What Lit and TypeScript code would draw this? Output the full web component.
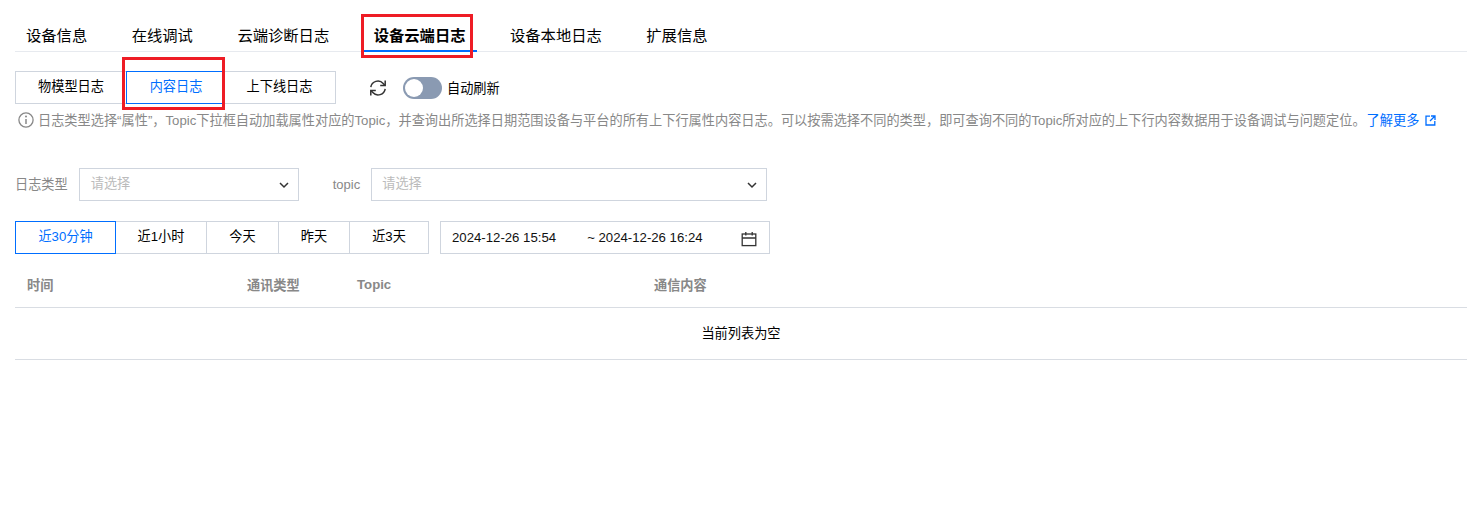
import { LitElement, html, css } from "lit";
import { customElement } from "lit/decorators.js";

const chevron = html`<svg class="chev" width="12" height="12" viewBox="0 0 12 12"><path d="M2 4l4 4 4-4" fill="none" stroke="#333" stroke-width="1.5"/></svg>`;

@customElement("app-root")
export class AppRoot extends LitElement {
  static styles = css`
    :host { display: block; position: relative; height: 508px; background: #fff; overflow: hidden;
      font-family: "Liberation Sans", "Noto Sans CJK SC", sans-serif; font-size: 13.2px; color: #000; }
    .page { padding: 16px 12px 0 15px; display: flex; flex-direction: column; }
    .tabs { display: flex; height: 35px; border-bottom: 1px solid #e7eaef; box-sizing: content-box; }
    .tab { font-size: 15.3px; line-height: 39px; padding: 0 11px; margin-right: 22.5px; height: 36px; box-sizing: border-box; color: #000; white-space: nowrap; }
    .tab.on { font-weight: 700; border-bottom: 2px solid #006eff; }
    .row1 { display: flex; align-items: center; margin-top: 19px; }
    .seg { display: flex; height: 33px; }
    .seg > div { border: 1px solid #cfd5de; margin-left: -1px; padding-bottom: 5px; display: flex; align-items: center; justify-content: center; box-sizing: border-box; white-space: nowrap; background: #fff; }
    .seg > div:first-child { margin-left: 0; }
    .seg > div.on { border-color: #006eff; color: #006eff; position: relative; z-index: 1; }
    .seg > div.s2 { padding-left: 2px; }
    .times .seg > div { padding-bottom: 4px; }
    .s1 { width: 112px; } .s2 { width: 98px; } .s3 { width: 113px; }
    .refresh { margin-left: 33px; display: block; }
    .toggle { margin-left: 16px; width: 39px; height: 22px; border-radius: 11px; background: #8a9ab2; position: relative; }
    .knob { position: absolute; left: 2px; top: 2px; width: 18px; height: 18px; border-radius: 50%; background: #fff; }
    .auto { margin-left: 5px; padding-bottom: 1px; }
    .info { display: flex; align-items: center; margin-top: 7px; margin-left: 3px; color: #888; white-space: nowrap; height: 18px; }
    .info svg { margin-right: 4px; flex: none; }
    .info span { padding-bottom: 1px; }
    .info a { color: #006eff; margin-left: 1px; padding-bottom: 1px; }
    .info .ext { margin: 0 0 0 6px; }
    .form { display: flex; align-items: center; margin-top: 39px; }
    .lbl { color: #888; padding-bottom: 2px; }
    .sel { height: 33px; border: 1px solid #cfd5de; box-sizing: border-box; margin-left: 11px; padding: 0 8px 0 11px; display: flex; align-items: center; justify-content: space-between; color: #bbb; }
    .sel span { padding-bottom: 5px; }
    .sel.a { width: 220px; } .sel.b { width: 396px; padding-left: 10px; }
    .lbl.t { margin-left: 34px; font-size: 13px; padding-bottom: 1px; }
    .times { display: flex; align-items: center; margin-top: 20px; }
    .seg .t1 { width: 101px; } .seg .t2 { width: 92px; } .seg .t3 { width: 73px; } .seg .t4 { width: 72px; } .seg .t5 { width: 80px; }
    .range { margin-left: 11px; width: 330px; height: 33px; border: 1px solid #cfd5de; box-sizing: border-box; display: flex; align-items: center; padding: 0 12px 0 11px; white-space: nowrap; color: #111; }
    .range .to { margin-left: 31px; }
    .range span { padding-bottom: 1px; }
    .range svg { margin-left: auto; margin-top: 2px; }
    .thead { display: grid; grid-template-columns: 220px 110px 297px 1fr; height: 54px; box-sizing: border-box; padding-top: 7px; align-items: center; border-bottom: 1px solid #d9dde3; color: #888; font-weight: 700; }
    .thead > div { padding-left: 12px; }
    .empty { height: 52px; box-sizing: border-box; padding-bottom: 3px; display: flex; align-items: center; justify-content: center; border-bottom: 1px solid #d9dde3; }
    .mark { position: absolute; border: 3px solid #ee1c25; box-sizing: border-box; pointer-events: none; z-index: 5; }
    .m1 { left: 361px; top: 14px; width: 112px; height: 44px; }
    .m2 { left: 122px; top: 57px; width: 103px; height: 53px; }
  `;

  render() {
    return html`
      <div class="page">
        <div class="tabs">
          <div class="tab">设备信息</div>
          <div class="tab">在线调试</div>
          <div class="tab">云端诊断日志</div>
          <div class="tab on">设备云端日志</div>
          <div class="tab">设备本地日志</div>
          <div class="tab">扩展信息</div>
        </div>
        <div class="row1">
          <div class="seg">
            <div class="s1">物模型日志</div><div class="s2 on">内容日志</div><div class="s3">上下线日志</div>
          </div>
          <svg class="refresh" width="18" height="18" viewBox="0 0 18 18" fill="none" stroke="#333" stroke-width="1.5">
            <path d="M1.8 8.2A7.2 7.2 0 0 1 14.2 4.4L16 6.4"/><path d="M16.2 1.6v5h-5"/>
            <path d="M16.2 9.8A7.2 7.2 0 0 1 3.8 13.6L2 11.6"/><path d="M1.8 16.4v-5h5"/>
          </svg>
          <div class="toggle"><div class="knob"></div></div>
          <div class="auto">自动刷新</div>
        </div>
        <div class="info">
          <svg width="16" height="16" viewBox="0 0 16 16" fill="none"><circle cx="8" cy="8" r="7.1" stroke="#888" stroke-width="1.3"/><path d="M8 7v5" stroke="#888" stroke-width="1.5"/><circle cx="8" cy="4.6" r="1" fill="#888"/></svg>
          <span>日志类型选择“属性”，Topic下拉框自动加载属性对应的Topic，并查询出所选择日期范围设备与平台的所有上下行属性内容日志。可以按需选择不同的类型，即可查询不同的Topic所对应的上下行内容数据用于设备调试与问题定位。</span>
          <a>了解更多</a>
          <svg class="ext" width="11" height="11" viewBox="0 0 11 11" fill="none" stroke="#006eff" stroke-width="1.3"><path d="M5 1.2H1v8.8h8.8V6"/><path d="M6 1h4v4M10 1L5 6"/></svg>
        </div>
        <div class="form">
          <span class="lbl">日志类型</span>
          <div class="sel a"><span>请选择</span>${chevron}</div>
          <span class="lbl t">topic</span>
          <div class="sel b"><span>请选择</span>${chevron}</div>
        </div>
        <div class="times">
          <div class="seg">
            <div class="t1 on">近30分钟</div><div class="t2">近1小时</div><div class="t3">今天</div><div class="t4">昨天</div><div class="t5">近3天</div>
          </div>
          <div class="range"><span>2024-12-26 15:54</span><span class="to">~ 2024-12-26 16:24</span><svg width="16" height="16" viewBox="0 0 16 16" fill="none" stroke="#333" stroke-width="1.3"><rect x="1.2" y="3" width="13.6" height="11.6"/><path d="M1.2 7h13.6M4.8 1v3.5M11.2 1v3.5"/></svg></div>
        </div>
        <div class="thead"><div>时间</div><div>通讯类型</div><div>Topic</div><div>通信内容</div></div>
        <div class="empty">当前列表为空</div>
      </div>
      <div class="mark m1"></div>
      <div class="mark m2"></div>
    `;
  }
}
